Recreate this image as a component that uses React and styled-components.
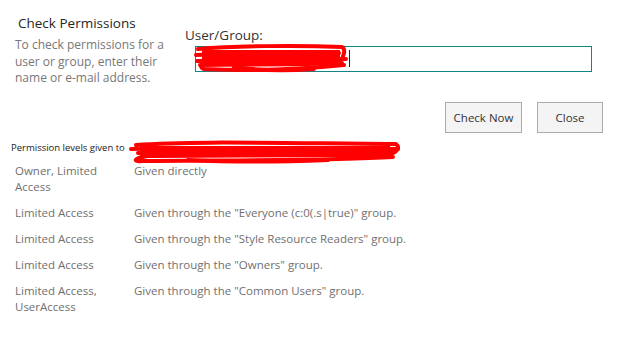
import React from 'react';
import styled, { createGlobalStyle } from 'styled-components';

const GlobalStyle = createGlobalStyle`
  body {
    margin: 0;
    background: #ffffff;
    font-family: "Open Sans", "Liberation Sans", sans-serif;
  }
`;

const Page = styled.div`
  width: 618px;
  height: 339px;
  background: #ffffff;
  position: relative;
  overflow: hidden;
`;

const Top = styled.div`
  display: flex;
  padding-top: 12px;
`;

const Intro = styled.div`
  width: 170px;
  padding-left: 15px;
`;

const Title = styled.div`
  font-size: 13.5px;
  color: #262626;
  padding: 2px 0 0 3px;
  line-height: 18px;
`;

const Description = styled.div`
  margin-top: 5px;
  font-size: 12px;
  line-height: 16.5px;
  color: #777777;
  width: 150px;
`;

const Field = styled.div`
  flex: 1;
  padding-top: 14px;
`;

const FieldLabel = styled.div`
  font-size: 13.5px;
  color: #333333;
  line-height: 18px;
`;

const InputBox = styled.div`
  position: relative;
  margin: 2px 0 0 10px;
  width: 395px;
  height: 24px;
  border: 1px solid #128585;
`;

const Caret = styled.div`
  position: absolute;
  left: 153px;
  top: 3px;
  width: 1px;
  height: 17px;
  background: #222222;
`;

const Buttons = styled.div`
  display: flex;
  justify-content: flex-end;
  gap: 15px;
  padding-right: 15px;
  margin-top: 15px;
`;

const Button = styled.button`
  width: ${p => p.$w}px;
  height: 31px;
  background: #f4f4f4;
  border: 1px solid #ababab;
  font-family: "Open Sans", "Liberation Sans", sans-serif;
  font-size: 11.5px;
  color: #333333;
  padding: 0;
`;

const LevelsHeading = styled.div`
  margin-top: 8px;
  padding-left: 11px;
  font-size: 9.5px;
  color: #222222;
  line-height: 14px;
`;

const Table = styled.div`
  margin-top: 8px;
  padding-left: 15px;
`;

const Row = styled.div`
  display: grid;
  grid-template-columns: 119px 1fr;
  padding-bottom: 10px;
  font-size: 11.5px;
  line-height: 16px;
  color: #707070;
`;

const Level = styled.div`
  white-space: pre-line;
`;

const Scribble = styled.svg`
  position: absolute;
  left: ${p => p.$x}px;
  top: ${p => p.$y}px;
  overflow: visible;
  pointer-events: none;
`;

const rows = [
  ['Owner, Limited\nAccess', 'Given directly'],
  ['Limited Access', 'Given through the "Everyone (c:0(.s|true)" group.'],
  ['Limited Access', 'Given through the "Style Resource Readers" group.'],
  ['Limited Access', 'Given through the "Owners" group.'],
  ['Limited Access,\nUserAccess', 'Given through the "Common Users" group.'],
];

const App = () => {
  return (
    <Page>
      <GlobalStyle />
      <Top>
        <Intro>
          <Title>Check Permissions</Title>
          <Description>
            To check permissions for a user or group, enter their name or e-mail address.
          </Description>
        </Intro>
        <Field>
          <FieldLabel>User/Group:</FieldLabel>
          <InputBox>
            <Caret />
          </InputBox>
        </Field>
      </Top>
      <Buttons>
        <Button $w={77}>Check Now</Button>
        <Button $w={66}>Close</Button>
      </Buttons>
      <LevelsHeading>Permission levels given to</LevelsHeading>
      <Table>
        {rows.map(([level, how], i) => (
          <Row key={i}>
            <Level>{level}</Level>
            <div>{how}</div>
          </Row>
        ))}
      </Table>

      <Scribble $x={194} $y={43} width="160" height="30" viewBox="0 0 160 30">
        <g fill="none" stroke="#ff0000" strokeWidth="4" strokeLinecap="round" strokeLinejoin="round">
          <path d="M4 6 C40 3 100 2 148 4 C152 6 150 14 146 18 L20 19 C8 20 4 24 10 26 C50 28 100 27 150 22" />
          <path d="M2 12 C40 10 90 9 145 10 M3 18 C50 17 110 16 152 16 M6 22 C60 21 100 22 148 20" />
          <path d="M40 24 C60 27 90 28 120 26" />
        </g>
        <rect x="8" y="7" width="138" height="13" fill="#ff0000" />
      </Scribble>

      <Scribble $x={128} $y={140} width="275" height="24" viewBox="0 0 275 24">
        <g fill="none" stroke="#ff0000" strokeWidth="4" strokeLinecap="round" strokeLinejoin="round">
          <path d="M8 5 C60 1 140 3 268 4 C272 7 270 12 262 14 C180 16 100 15 20 16 C6 18 4 22 14 21 C100 20 200 21 265 17" />
          <path d="M3 9 C80 7 180 8 270 9 M10 13 C90 12 180 12 266 12" />
          <path d="M60 20 C100 22 150 22 200 20" />
        </g>
        <rect x="12" y="6" width="250" height="10" fill="#ff0000" />
      </Scribble>
    </Page>
  );
};

export default App;
